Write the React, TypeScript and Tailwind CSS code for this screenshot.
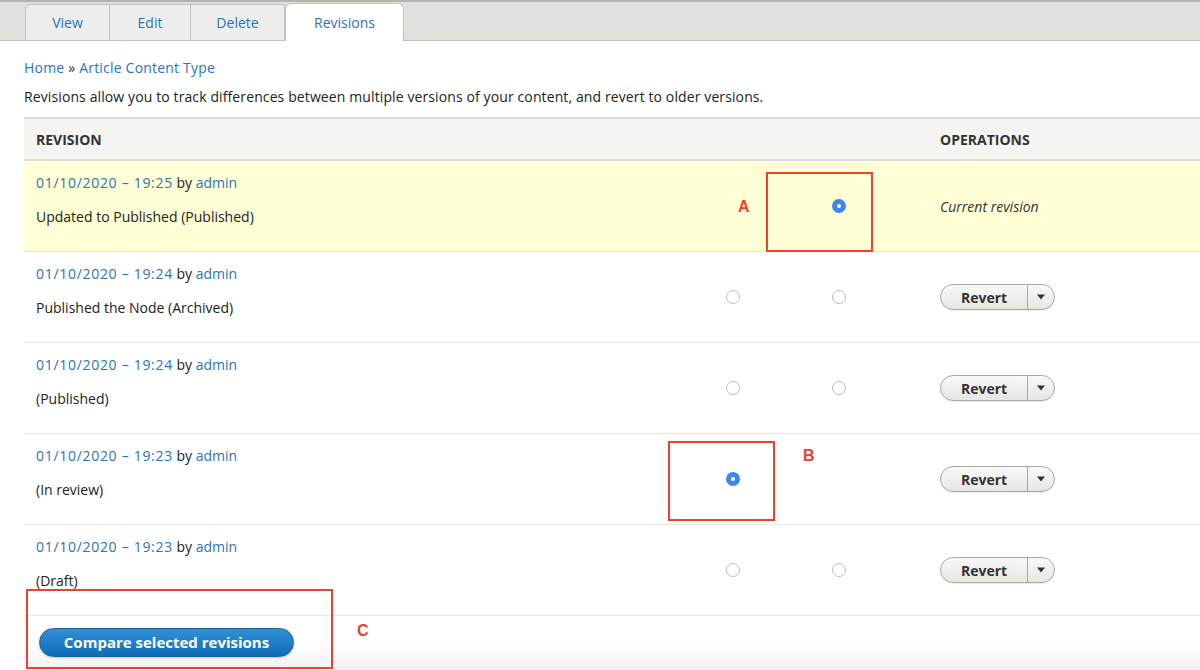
import React from "react";

const rows = [
  { date: "01/10/2020 – 19:25", msg: "Updated to Published (Published)", current: true, left: null as null | boolean, right: true as null | boolean },
  { date: "01/10/2020 – 19:24", msg: "Published the Node (Archived)", current: false, left: false as null | boolean, right: false as null | boolean },
  { date: "01/10/2020 – 19:24", msg: "(Published)", current: false, left: false as null | boolean, right: false as null | boolean },
  { date: "01/10/2020 – 19:23", msg: "(In review)", current: false, left: true as null | boolean, right: null as null | boolean },
  { date: "01/10/2020 – 19:23", msg: "(Draft)", current: false, left: false as null | boolean, right: false as null | boolean },
];

function Radio({ checked }: { checked: boolean }) {
  if (checked) {
    return (
      <span className="flex h-[14px] w-[14px] items-center justify-center rounded-full bg-[#3f86ec]">
        <span className="h-[4px] w-[4px] rounded-full bg-white" />
      </span>
    );
  }
  return <span className="block h-[14px] w-[14px] rounded-full border border-[#bdbdbd] bg-white" />;
}

function RevertButton() {
  return (
    <div className="flex h-[26px] w-[115px] items-stretch overflow-hidden rounded-full border border-[#a8a8a4] bg-gradient-to-b from-[#f8f8f6] to-[#e6e6e2] shadow-[0_1px_1px_rgba(0,0,0,0.08)]">
      <span className="flex w-[86px] items-center justify-center text-[14px] font-bold text-[#333]">Revert</span>
      <span className="w-px bg-[#a8a8a4]" />
      <span className="flex flex-1 items-center justify-center">
        <svg width="10" height="6" viewBox="0 0 10 6">
          <path d="M1 0.5 L9 0.5 L5 5.5 Z" fill="#333" />
        </svg>
      </span>
    </div>
  );
}

export default function App() {
  return (
    <div className="relative h-[670px] w-[1200px] overflow-hidden bg-white font-['Open_Sans',sans-serif] text-[14px] text-[#222]">
      {/* Tab bar */}
      <div className="flex h-[41px] items-end border-t-2 border-b border-t-[#b3b3af] border-b-[#c3c2bd] bg-[#e1e0dc] pl-[25px]">
        <div className="flex h-[36px] w-[85px] items-center justify-center rounded-tl-[6px] border border-b-0 border-[#c3c2bd] bg-[#ededeb] text-[#2a74b8]">View</div>
        <div className="flex h-[36px] w-[81px] items-center justify-center border border-l-0 border-b-0 border-[#c3c2bd] bg-[#ededeb] text-[#2a74b8]">Edit</div>
        <div className="flex h-[36px] w-[94px] items-center justify-center border border-l-0 border-b-0 border-[#c3c2bd] bg-[#ededeb] text-[#2a74b8]">Delete</div>
        <div className="-mb-px flex h-[38px] w-[119px] items-center justify-center rounded-t-[6px] border border-b-0 border-[#c3c2bd] bg-white text-[#2a74b8]">Revisions</div>
      </div>

      {/* Breadcrumb */}
      <div className="mt-[17px] pl-[24px] leading-5 tracking-[0.2px] text-[#2a74b8]">
        Home <span className="text-[#333]">»</span> Article Content Type
      </div>
      <p className="mt-[9px] pl-[24px] leading-5 tracking-[0.11px] text-[#222]">
        Revisions allow you to track differences between multiple versions of your content, and revert to older versions.
      </p>

      {/* Table */}
      <div className="ml-[24px] mt-[10px]">
        <div className="grid h-[44px] grid-cols-[656px_106px_106px_1fr] items-center border-y-2 border-t-[#dcdbd6] border-b-[#dcdbd6] bg-[#f4f4f1] text-[14px] font-bold text-[#333]">
          <div className="pl-[12px] pt-px">REVISION</div>
          <div />
          <div />
          <div className="pl-[48px] pt-px">OPERATIONS</div>
        </div>
        {rows.map((r, i) => (
          <div
            key={i}
            className={`grid h-[91px] grid-cols-[656px_106px_106px_1fr] border-b border-[#e7e6e1] ${r.current ? "bg-[#ffffd5]" : "bg-white"}`}
          >
            <div className="pl-[12px] pt-[12px] leading-5">
              <div>
                <span className="tracking-[0.7px] text-[#2a74b8]">{r.date}</span> by <span className="text-[#2a74b8]">admin</span>
              </div>
              <div className="mt-[14px]">{r.msg}</div>
            </div>
            <div className="flex items-center justify-center">{r.left !== null && <Radio checked={r.left} />}</div>
            <div className="flex items-center justify-center">{r.right !== null && <Radio checked={r.right} />}</div>
            <div className="flex items-center pl-[48px]">
              {r.current ? <span className="italic text-[#333]">Current revision</span> : <RevertButton />}
            </div>
          </div>
        ))}
        <div className="h-[54px] bg-gradient-to-b from-white via-white to-[#f1f1f1] pl-[15px] pt-[12px]">
          <button className="h-[29px] w-[255px] rounded-full border border-[#1b5f96] bg-gradient-to-b from-[#3290d6] to-[#0e6bb5] text-[15px] font-bold text-white shadow-[0_1px_2px_rgba(0,0,0,0.2)]">
            Compare selected revisions
          </button>
        </div>
      </div>

      {/* Annotations */}
      <div className="absolute left-[766px] top-[172px] h-[80px] w-[107px] border-2 border-[#e8432c]" />
      <div className="absolute left-[738px] top-[195px] font-['Liberation_Sans',sans-serif] text-[16px] font-bold text-[#e8432c]">A</div>
      <div className="absolute left-[668px] top-[441px] h-[80px] w-[107px] border-2 border-[#e8432c]" />
      <div className="absolute left-[803px] top-[444px] font-['Liberation_Sans',sans-serif] text-[16px] font-bold text-[#e8432c]">B</div>
      <div className="absolute left-[26px] top-[589px] h-[80px] w-[307px] border-2 border-[#e8432c]" />
      <div className="absolute left-[357px] top-[619px] font-['Liberation_Sans',sans-serif] text-[16px] font-bold text-[#e8432c]">C</div>
    </div>
  );
}
